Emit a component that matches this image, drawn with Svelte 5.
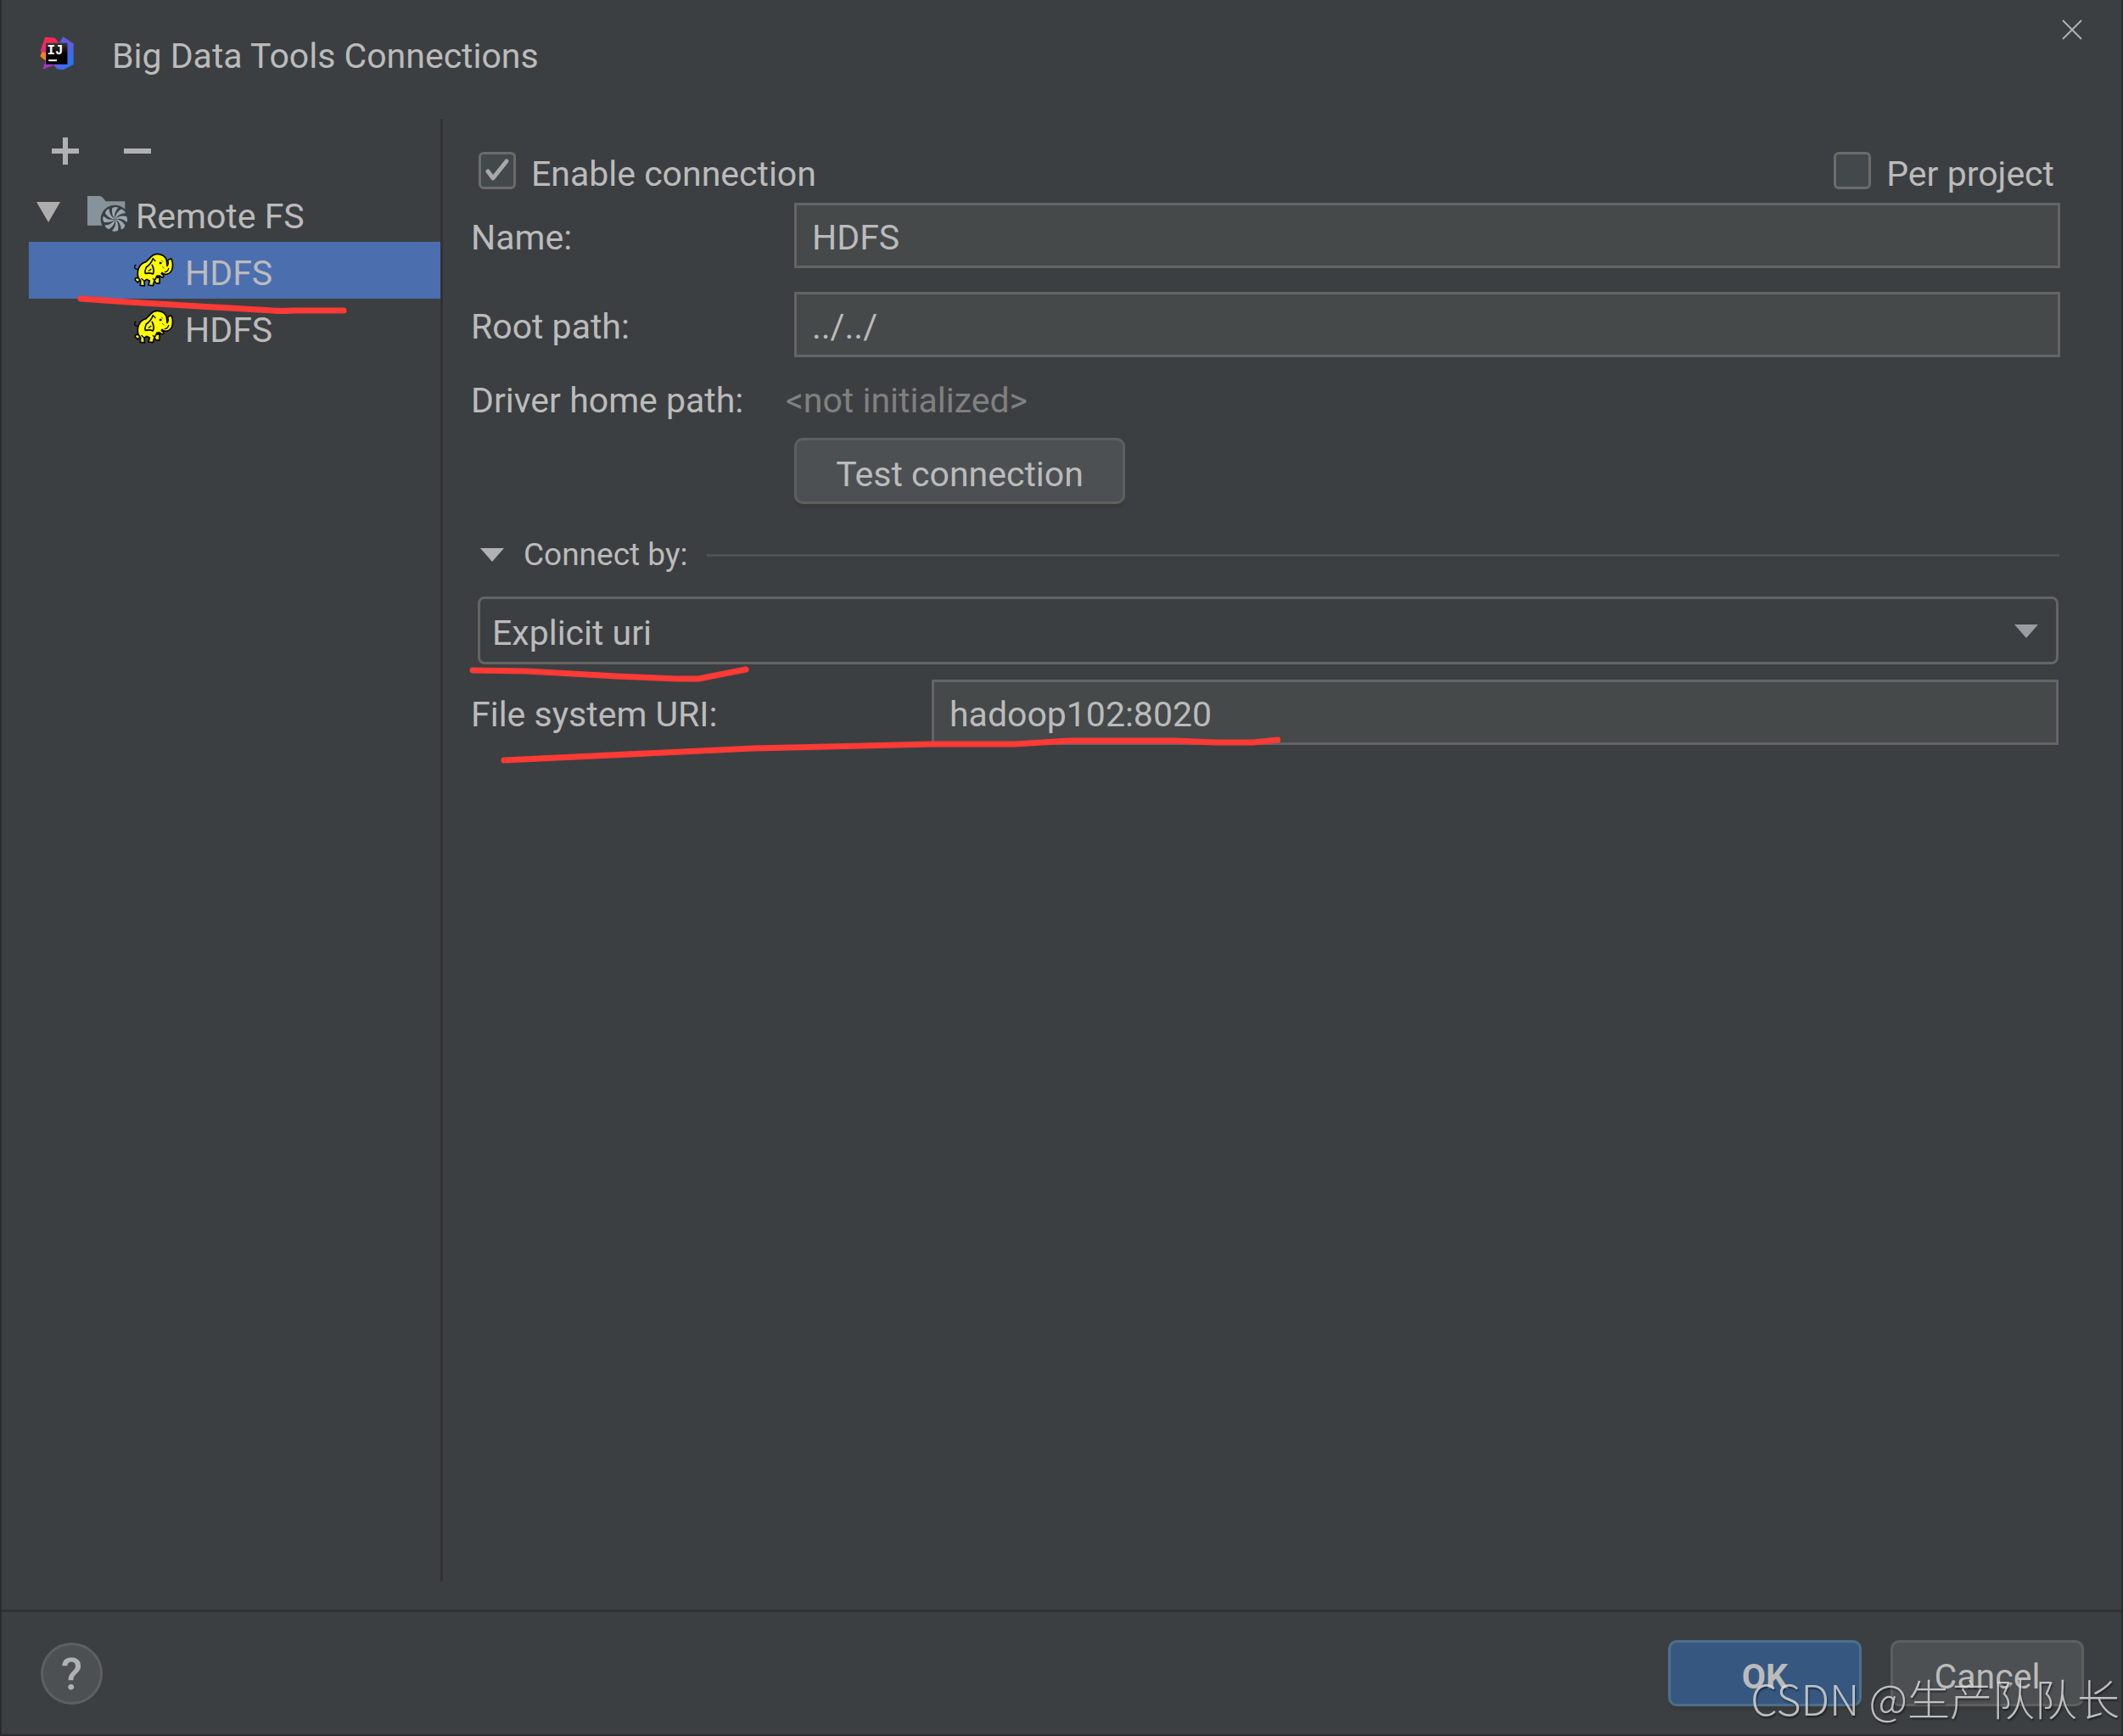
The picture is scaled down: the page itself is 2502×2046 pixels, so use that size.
<script lang="ts">
  let enabled = true;
  let perProject = false;
  let name = 'HDFS';
  let rootPath = '../../';
  let connectBy = 'Explicit uri';
  let uri = 'hadoop102:8020';

  let groupOpen = true;
  let connectOpen = true;
  let selected = 0;

  const connections = ['HDFS', 'HDFS'];
  const blades = [0, 45, 90, 135, 180, 225, 270, 315];
</script>

<div class="dialog">
  <header>
    <svg class="logo" viewBox="20 37 122 122" aria-hidden="true">
      <defs>
        <linearGradient id="ij-blue" x1="0" y1="0" x2="1" y2="1">
          <stop offset="0" stop-color="#2f6cf0" />
          <stop offset=".45" stop-color="#6b57e0" />
          <stop offset="1" stop-color="#0f80f8" />
        </linearGradient>
        <linearGradient id="ij-red" x1="1" y1="0" x2="0" y2="1">
          <stop offset="0" stop-color="#fe2857" />
          <stop offset=".6" stop-color="#fe2857" />
          <stop offset="1" stop-color="#b92fa8" />
        </linearGradient>
        <linearGradient id="ij-black" x1="0" y1="0" x2="0" y2="1">
          <stop offset="0" stop-color="#3a3a3a" />
          <stop offset=".5" stop-color="#000" />
        </linearGradient>
      </defs>
      <path d="M104 38L141 63V138L104 157L82 154L60 130L88 62Z" fill="url(#ij-blue)" />
      <path d="M39 39L74 42L90 62L60 100L21 90Z" fill="url(#ij-red)" />
      <path d="M28 91L50 98V132L21 108Z" fill="#fc801d" />
      <path d="M40 122L86 134L31 155Z" fill="#a336c4" />
      <rect x="42" y="60" width="77" height="77" fill="url(#ij-black)" />
      <text x="46" y="102" class="logo-text">IJ</text>
      <rect x="51" y="120" width="30" height="6" fill="#fff" />
    </svg>
    <h1>Big Data Tools Connections</h1>
    <button class="icon-btn close" aria-label="Close">
      <svg width="24" height="24" viewBox="0 0 24 24"><path d="M1 1L23 23M23 1L1 23" stroke="#afb1b3" stroke-width="2" /></svg>
    </button>
  </header>

  <main>
    <aside>
      <div class="toolbar">
        <button class="icon-btn" aria-label="Add">
          <svg width="32" height="32" viewBox="0 0 32 32"><path d="M16 0V32M0 16H32" stroke="#afb1b3" stroke-width="6" /></svg>
        </button>
        <button class="icon-btn" aria-label="Remove">
          <svg width="32" height="32" viewBox="0 0 32 32"><path d="M0 16H32" stroke="#afb1b3" stroke-width="6" /></svg>
        </button>
      </div>

      <button class="row group" on:click={() => (groupOpen = !groupOpen)}>
        <svg class="twisty" width="28" height="24" viewBox="0 0 28 24"><path d="M0 0H28L14 24Z" fill="#adadad" /></svg>
        <svg width="48" height="42" viewBox="39 27 144 126">
          <path d="M39 27H82Q92 28 104 46H172V131H39Z" fill="#87939a" />
          <circle cx="136" cy="109" r="50" fill="#3c3f41" />
          <g fill="#9aa7b0" transform="translate(137 109)">
            {#each blades as angle}
              <path d="M0 0Q-15 -16 -10 -40Q2 -46 11 -41Q-6 -24 0 0Z" transform="rotate({angle})" />
            {/each}
          </g>
        </svg>
        <span>Remote FS</span>
      </button>

      {#if groupOpen}
        {#each connections as item, i}
          <button class="row child" class:selected={selected === i} on:click={() => (selected = i)}>
            <svg width="48" height="41" viewBox="200 218 144 123">
              <g fill="#ff0" stroke="#000" stroke-width="5" stroke-linejoin="round" stroke-linecap="round">
                <path d="M216 276Q204 276 205 266Q205 262 209 261" fill="none" stroke-width="4" />
                <path d="M217 306Q205 305 207 314L216 323L226 312Z" />
                <path d="M279 306L293 304V326L280 325L275 316Z" />
                <path d="M219 273Q226 255 245 250Q256 240 263 232Q275 219 292 223Q310 226 317 241Q319 253 320 264Q326 258 322 245Q328 239 335 239Q343 257 337 278Q329 294 313 294Q307 294 302 288L300 292Q309 296 307 303Q300 307 294 299L284 299Q281 308 275 315L270 334L254 332L258 317L247 312L239 318L240 335L225 333L226 316Q210 302 219 273Z" />
                <path d="M270 238Q263 257 246 269Q240 285 243 291Q258 287 270 293Q276 279 267 261" fill="none" />
                <path d="M255 282L263 276M272 240L278 247M312 286Q323 284 325 273M239 318L229 309M275 315L270 309" fill="none" stroke-width="4" />
                <circle cx="296" cy="254" r="3" fill="#000" stroke-width="3" />
                <path d="M300 245L305 249M303 267L309 272" fill="none" stroke-width="2" />
              </g>
            </svg>
            <span>{item}</span>
            {#if i === 0}
              <svg class="mark mark-tree" width="320" height="30" viewBox="0 0 320 30" aria-hidden="true">
                <path d="M5 7L61 11L231 21Q242 22 256 21H315" />
              </svg>
            {/if}
          </button>
        {/each}
      {/if}
    </aside>

    <form on:submit|preventDefault>
      <div class="checks">
        <label class="check">
          <span class="box">
            <input type="checkbox" bind:checked={enabled} />
            {#if enabled}
              <svg class="tick" viewBox="0 0 44 44"><path d="M11 23L17 31L33 11" /></svg>
            {/if}
          </span>
          <span class="check-text">Enable connection</span>
        </label>
        <label class="check">
          <span class="box">
            <input type="checkbox" bind:checked={perProject} />
            {#if perProject}
              <svg class="tick" viewBox="0 0 44 44"><path d="M11 23L17 31L33 11" /></svg>
            {/if}
          </span>
          <span class="check-text">Per project</span>
        </label>
      </div>

      <div class="fields">
        <label for="name">Name:</label>
        <input id="name" type="text" bind:value={name} />
        <label for="root">Root path:</label>
        <input id="root" type="text" bind:value={rootPath} />
      </div>

      <div class="driver">
        <span class="driver-label">Driver home path:</span>
        <span class="muted">&lt;not initialized&gt;</span>
      </div>

      <button type="button" class="btn test">Test connection</button>

      <button type="button" class="section" on:click={() => (connectOpen = !connectOpen)}>
        <svg width="28" height="16" viewBox="0 0 28 16"><path d="M0 0H28L14 16Z" fill="#afb1b3" /></svg>
        <span>Connect by:</span>
        <span class="rule"></span>
      </button>

      {#if connectOpen}
        <div class="connect">
          <div class="select">
            <select aria-label="Connect by" bind:value={connectBy}>
              <option>Explicit uri</option>
              <option>Configuration files directory</option>
            </select>
            <svg class="caret" width="28" height="16" viewBox="0 0 28 16"><path d="M0 0H28L14 16Z" fill="#9a9da1" /></svg>
            <svg class="mark mark-select" width="332" height="24" viewBox="0 0 332 24" aria-hidden="true">
              <path d="M4 7L68 8L174 14L244 17H270L326 6" />
            </svg>
          </div>
          <div class="uri">
            <label for="uri">File system URI:</label>
            <input id="uri" type="text" bind:value={uri} />
            <svg class="mark mark-uri" width="920" height="36" viewBox="0 0 920 36" aria-hidden="true">
              <path d="M5 30L298 16L509 11H607L671 7H796L843 9H888L917 6" />
            </svg>
          </div>
        </div>
      {/if}
    </form>
  </main>

  <footer>
    <button class="help" aria-label="Help">?</button>
    <div class="actions">
      <button class="btn primary">OK</button>
      <button class="btn">Cancel</button>
    </div>
  </footer>

  <div class="watermark">CSDN @生产队队长</div>
</div>

<style>
  :global(body) { background: #3c3f41; }

  .dialog {
    position: relative;
    display: flex;
    flex-direction: column;
    box-sizing: border-box;
    min-height: 100vh;
    border: 2px solid #2b2b2b;
    border-top: 0;
    background: #3c3f41;
    color: #bbb;
    font: 41px/48px "Comic Sans MS", Roboto, sans-serif;
  }

  button, input, select {
    box-sizing: border-box;
    margin: 0;
    color: inherit;
    font: inherit;
  }
  svg { display: block; flex: none; }

  header { display: flex; height: 140px; }
  .logo { width: 40px; height: 40px; margin: 43px 0 0 45px; }
  .logo-text { fill: #fff; font: bold 48px "Liberation Mono", monospace; }
  h1 { flex: 1; margin: 42px 0 0 45px; font: inherit; }

  .icon-btn { padding: 0; border: 0; background: none; }
  .close { align-self: flex-start; margin: 23px 46px 0 0; }

  main { display: flex; flex: 1; padding-bottom: 33px; }

  aside {
    flex: none;
    box-sizing: border-box;
    width: 520px;
    padding-left: 32px;
    border-right: 3px solid #323232;
  }
  .toolbar {
    display: flex;
    align-items: center;
    gap: 53px;
    box-sizing: border-box;
    height: 78px;
    padding: 0 0 2px 27px;
  }

  .row {
    position: relative;
    display: flex;
    align-items: center;
    width: 100%;
    height: 67px;
    border: 0;
    background: none;
    text-align: left;
  }
  .row span { padding-top: 6px; }
  .group { gap: 9px; padding: 0 0 0 9px; }
  .twisty { margin: 0 23px 4px 0; }
  .child { gap: 13px; padding: 0 0 0 123px; }
  .selected { background: #4b6eaf; }

  form { flex: 1; min-width: 0; padding: 39px 72px 0 31px; }

  .checks { display: flex; justify-content: space-between; padding: 0 7px 0 11px; }
  .check { display: flex; gap: 18px; }
  .check-text { padding-top: 8px; line-height: 36px; }
  .box { position: relative; width: 44px; height: 44px; }
  .box input {
    appearance: none;
    width: 44px;
    height: 44px;
    border: 3px solid #6b6b6b;
    border-radius: 6px;
    background: #43494a;
  }
  .tick { position: absolute; inset: 0; pointer-events: none; }
  .tick path { fill: none; stroke: #a9a9a9; stroke-width: 5; stroke-linecap: round; stroke-linejoin: round; }

  input[type='text'] {
    width: 100%;
    height: 77px;
    padding: 4px 18px 0;
    border: 3px solid #646464;
    border-radius: 0;
    background: #45494a;
  }

  .fields {
    display: grid;
    grid-template-columns: 383px 1fr;
    align-items: center;
    row-gap: 28px;
    margin-top: 16px;
  }
  .fields label, .uri label { padding: 4px 0 0 2px; }

  .driver { display: flex; margin-top: 27px; padding-left: 2px; }
  .driver-label { width: 371px; }
  .muted { color: #808080; }

  .btn {
    height: 78px;
    min-width: 228px;
    padding: 8px 44px 0;
    border: 3px solid #5e6060;
    border-radius: 10px;
    background: #4c5052;
    box-shadow: 0 6px 0 -1px #383a3b;
  }
  .test { display: block; width: 390px; margin: 20px 0 0 383px; }
  .primary { border-color: #4c708c; background: #365880; font-weight: bold; }

  .section {
    display: flex;
    align-items: center;
    width: 100%;
    margin-top: 38px;
    padding: 0 1px 0 13px;
    border: 0;
    background: none;
    font-size: 37px;
    line-height: 44px;
    gap: 23px;
  }
  .rule { flex: 1; height: 3px; background: #515151; }

  .connect { padding-right: 2px; margin-top: 27px; }
  .select { position: relative; padding-left: 10px; }
  select {
    appearance: none;
    display: block;
    width: 100%;
    height: 80px;
    padding: 6px 80px 0 14px;
    border: 3px solid #646464;
    border-radius: 8px;
    background: #3c3f41;
  }
  .caret { position: absolute; right: 24px; top: 33px; pointer-events: none; }

  .uri {
    position: relative;
    display: grid;
    grid-template-columns: 545px 1fr;
    align-items: center;
    margin-top: 18px;
  }

  .mark { position: absolute; z-index: 1; pointer-events: none; }
  .mark path { fill: none; stroke: #fc3a36; stroke-width: 7; stroke-linecap: round; stroke-linejoin: round; }
  .mark-tree { left: 56px; top: 60px; }
  .mark-select { left: 0; top: 80px; }
  .mark-uri { left: 36px; top: 65px; }

  footer {
    display: flex;
    align-items: center;
    justify-content: space-between;
    height: 144px;
    padding: 0 44px 0 46px;
    border-top: 3px solid #323232;
  }
  .help {
    width: 73px;
    height: 73px;
    padding: 4px 0 0;
    border: 3px solid #5e6060;
    border-radius: 50%;
    background: #4c5052;
    color: #afb1b3;
    font: 500 52px/60px Roboto, sans-serif;
  }
  .actions { display: flex; gap: 34px; }

  .watermark {
    position: absolute;
    right: 2px;
    bottom: 8px;
    color: rgba(225, 225, 225, .8);
    font: 300 50px/72px "Noto Sans CJK SC", sans-serif;
    text-shadow: 1px 2px 2px rgba(0, 0, 0, .5);
    pointer-events: none;
  }
</style>
